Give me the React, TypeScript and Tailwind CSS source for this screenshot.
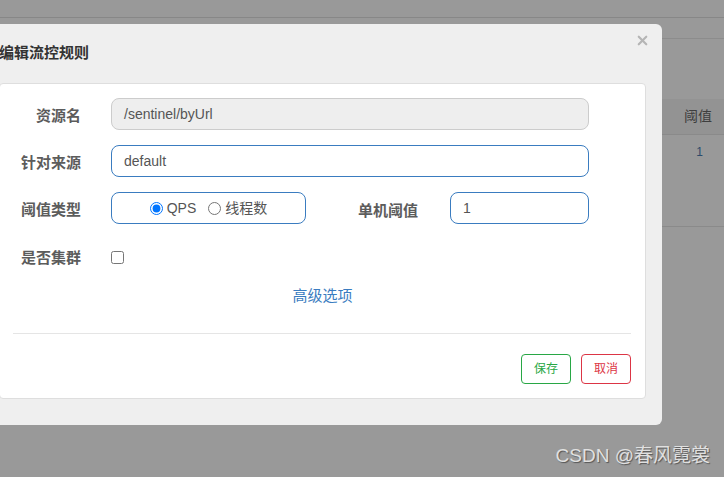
import React from "react";
import { X } from "lucide-react";

const font = "font-['Liberation_Sans','Noto_Sans_CJK_SC',sans-serif]";

function Label({ children, className = "" }: { children: React.ReactNode; className?: string }) {
  return (
    <div className={`text-[15px] font-bold text-[#5c5c5c] leading-none ${className}`}>{children}</div>
  );
}

export default function App() {
  return (
    <div className={`relative h-[477px] w-[724px] overflow-hidden bg-[#999999] ${font}`}>
      {/* page behind the overlay */}
      <div className="h-[18px] border-b border-[#878787]" />
      <div className="h-[21px] border-b border-[#8c8c8c]" />
      <div className="h-[60px]" />
      <div className="flex h-[36px] items-center justify-end border-b border-[#8a8a8a] bg-[#939393] pr-[12px]">
        <span className="text-[14px] text-[#3e3e3e]">阈值</span>
      </div>
      <div className="flex h-[92px] justify-end border-b border-[#8a8a8a] pr-[21px] pt-[8px]">
        <span className="text-[12px] text-[#2d4b6b]">1</span>
      </div>

      {/* modal */}
      <div className="absolute left-[-17px] top-[24px] flex h-[401px] w-[679px] flex-col rounded-[6px] bg-[#efefef]">
        <div className="relative flex h-[59px] items-center px-[16px]">
          <span className="text-[15px] font-bold text-[#333]">编辑流控规则</span>
          <X className="absolute right-[12px] top-[9px] h-[15px] w-[15px] text-[#b5b5b5]" strokeWidth={3.5} />
        </div>

        <div className="mx-[16px] flex h-[316px] flex-col rounded-[4px] border border-[#dedede] bg-white">
          <div className="flex flex-col gap-[15px] pt-[14px] pl-[1px]">
            <div className="flex h-[32px] items-center">
              <Label className="w-[80px] pt-[3px] text-right">资源名</Label>
              <div className="ml-[30px] flex h-[32px] w-[478px] items-center rounded-[8px] border border-[#cccccc] bg-[#eeeeee] px-[12px] text-[14px] text-[#555]">
                /sentinel/byUrl
              </div>
            </div>

            <div className="flex h-[32px] items-center">
              <Label className="w-[80px] pt-[2px] text-right">针对来源</Label>
              <div className="ml-[30px] flex h-[32px] w-[478px] items-center rounded-[8px] border border-[#3a7cc0] px-[12px] text-[14px] text-[#555]">
                default
              </div>
            </div>

            <div className="flex h-[32px] items-center">
              <Label className="w-[80px] pt-[2px] text-right">阈值类型</Label>
              <div className="ml-[30px] flex h-[32px] w-[195px] items-center justify-center gap-[4px] rounded-[8px] border border-[#3a7cc0] text-[14px] text-[#555]">
                <label className="flex items-center gap-[4px]">
                  <input type="radio" name="grade" defaultChecked className="m-0 h-[13px] w-[13px]" />
                  <span>QPS</span>
                </label>
                <label className="ml-[8px] flex items-center gap-[4px]">
                  <input type="radio" name="grade" className="m-0 h-[13px] w-[13px]" />
                  <span>线程数</span>
                </label>
              </div>
              <Label className="ml-[52px] w-[62px] pt-[4px]">单机阈值</Label>
              <div className="ml-[30px] flex h-[32px] w-[139px] items-center rounded-[8px] border border-[#3a7cc0] px-[12px] text-[14px] text-[#555]">
                1
              </div>
            </div>

            <div className="flex h-[32px] items-center pt-[4px]">
              <Label className="w-[80px] text-right">是否集群</Label>
              <input type="checkbox" className="m-0 ml-[30px] h-[13px] w-[13px]" />
            </div>
          </div>

          <div className="mt-[14px] text-center text-[15px] text-[#3a7cc0]">高级选项</div>

          <div className="mx-[13px] mt-[25px] mr-[14px] border-t border-[#e5e5e5]" />

          <div className="mr-[14px] mt-[20px] flex justify-end gap-[10px]">
            <button className="flex h-[30px] w-[50px] items-center justify-center rounded-[4px] border border-[#28a745] bg-white text-[12px] text-[#28a745]">
              保存
            </button>
            <button className="flex h-[30px] w-[50px] items-center justify-center rounded-[4px] border border-[#dc3545] bg-white text-[12px] text-[#dc3545]">
              取消
            </button>
          </div>
        </div>
      </div>

      {/* watermark */}
      <div className="absolute bottom-[7px] right-[14px] text-[19px] text-[#e0e0e0] [text-shadow:1px_1px_1px_rgba(0,0,0,0.45)]">
        CSDN @春风霓裳
      </div>
    </div>
  );
}
